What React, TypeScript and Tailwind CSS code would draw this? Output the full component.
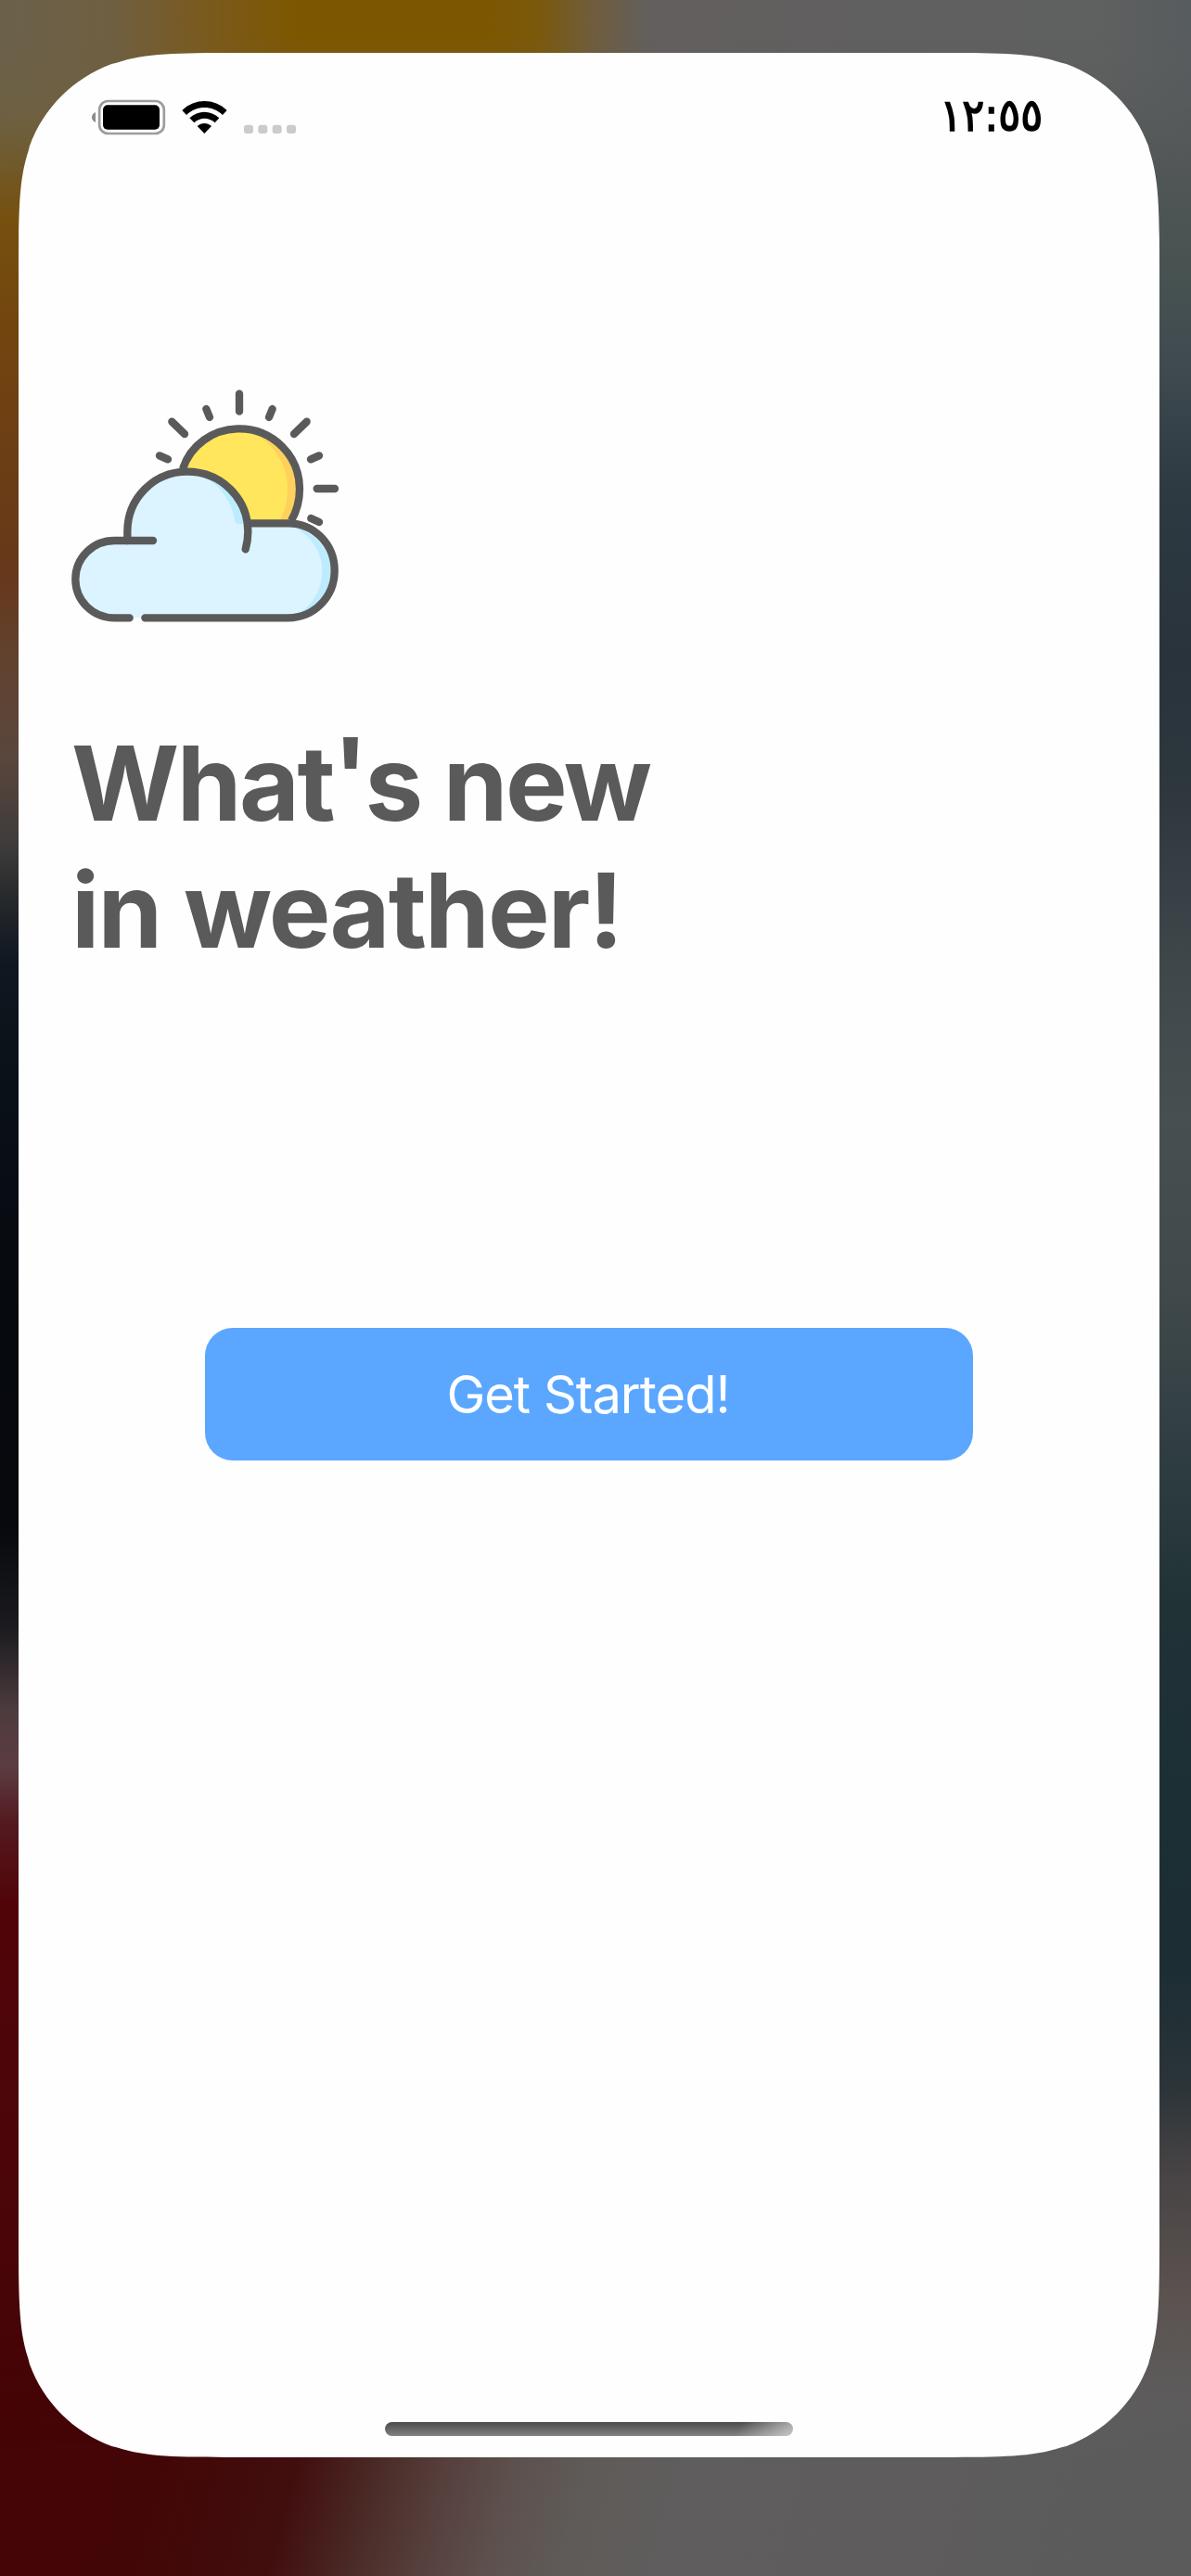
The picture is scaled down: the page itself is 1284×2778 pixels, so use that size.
const CARD_CLIP =
  "[clip-path:path('M243_0L987_0C1056.9_0_1091.9_0_1123.5_10.4L1129.6_11.9C1170.7_26.9_1203.1_59.3_1218.1_100.4L1219.6_106.5C1230_138.1_1230_173.1_1230_243L1230_2350C1230_2419.9_1230_2454.9_1219.6_2486.5L1218.1_2492.6C1203.1_2533.7_1170.7_2566.1_1129.6_2581.1L1123.5_2582.6C1091.9_2593_1056.9_2593_987_2593L243_2593C173.1_2593_138.1_2593_106.5_2582.6L100.4_2581.1C59.3_2566.1_26.9_2533.7_11.9_2492.6L10.4_2486.5C0_2454.9_0_2419.9_0_2350L0_243C0_173.1_0_138.1_10.4_106.5L11.9_100.4C26.9_59.3_59.3_26.9_100.4_11.9L106.5_10.4C138.1_0_173.1_0_243_0Z')]";

function Backdrop() {
  return (
    <div className="absolute inset-0">
      <div className="flex h-full">
        <div className="flex-1 bg-[linear-gradient(180deg,#6b614b_0px,#70603a_124px,#76500f_240px,#72450f_354px,#67381a_620px,#61422f_709px,#5a463d_815px,#3d3b3a_915px,#24272b_975px,#101720_1040px,#0a1118_1152px,#06090e_1417px,#07090d_1648px,#1b1b1f_1755px,#4c3b3e_1843px,#5c3c41_1905px,#53191f_1967px,#510408_2055px,#4c060a_2303px,#440406_2622px,#400808_2778px)]" />
        <div className="flex-1 bg-[linear-gradient(180deg,#5f5f5f_0px,#535758_160px,#485351_283px,#3f4b50_390px,#2d3a42_532px,#29333c_709px,#2d373d_850px,#3e464a_1028px,#465050_1205px,#414a4b_1382px,#303e43_1559px,#203236_1736px,#1c2f35_1949px,#1c2e34_2126px,#2b3439_2250px,#474344_2339px,#5b5350_2480px,#605e5f_2622px,#5a5a5a_2778px)]" />
      </div>
      <div className="absolute inset-x-0 top-0 h-[200px] bg-[linear-gradient(90deg,#6b614b_0px,#6f5f42_120px,#7a5a1e_220px,#7d5700_320px,#7d5700_520px,#7a590c_580px,#6f5d3d_640px,#635f5e_700px,#606060_1000px,#5f6060_1180px,#575c5e_1284px)] [mask-image:linear-gradient(180deg,#000_40px,transparent_200px)]" />
      <div className="absolute inset-x-0 bottom-0 h-[260px] bg-[linear-gradient(105deg,#450405_0px,#430606_200px,#410e0e_345px,#4b2c28_435px,#563f3c_500px,#5d514e_575px,#5f5b58_650px,#5f5d5d_750px,#5e5c5d_1000px,#5b5b5b_1284px)] [mask-image:linear-gradient(0deg,#000_130px,transparent_260px)]" />
    </div>
  );
}

function StatusIcons() {
  return (
    <svg className="h-[70px] w-[250px]" viewBox="0 0 750 210">
      <path d="M39 93C31 96 27 102 27 109.500S31 123 39 126Z" fill="#8c8c8c" />
      <rect x="51.500" y="57" width="209" height="105" rx="28" fill="none" stroke="#9c9c9c" strokeWidth="8" />
      <rect x="63" y="70" width="183" height="79" rx="15" fill="#000" />
      <path d="M319 87C360 47 423 47 464 87L450 102C416 70 367 70 333 102Z" fill="#000" />
      <path d="M343 112C370 86 412 86 439 112L425 127C406 109 377 109 358 127Z" fill="#000" />
      <path d="M368 138C381 126 401 126 414 138L391 162Z" fill="#000" />
      {[519, 565, 611, 657].map((x) => (
        <rect key={x} x={x} y="134" width="30" height="28" rx="9" fill="#cbcbcb" />
      ))}
    </svg>
  );
}

const RAYS =
  "M594 74V131M487 123L498 150M701 123L690 150M376 164L417 204M812 164L771 204M336 274L363 286M852 274L825 286M845 381H903M826 477L852 489";

function WeatherIcon() {
  return (
    <svg className="h-[290px] w-[320px]" viewBox="0 0 960 870" fill="none" strokeLinecap="round" strokeWidth="25">
      <path d="M410 320C434 243 508 187 594 187C701 187 789 274 789 382C789 420 779 460 762 493H625Z" fill="#ffe65c" />
      <path d="M640 199C725 225 777 300 777 382C777 425 767 460 752 485H724C742 455 750 420 750 382C750 305 710 240 640 199Z" fill="#ffd15c" />
      <path d="M190 549H232V520C232 412 318 326 425 326C525 326 605 395 622 493H752C836 493 902 561 902 646C902 731 836 799 752 799H190C120 799 64 743 64 674S120 549 190 549Z" fill="#dbf4ff" />
      <path d="M470 338C550 350 607 415 619 495H590Q581 495 579 483C570 420 530 365 470 338Z" fill="#bcecfd" />
      <path d="M765 503C840 520 890 580 890 646C890 716 840 778 775 790C828 765 862 710 862 646C862 585 825 530 765 503Z" fill="#bcecfd" />
      <g stroke="#5a5a5a">
        <path d={RAYS} />
        <path d="M411 317C436 241 508 187 594 187C702 187 789 274 789 382C789 420 779 455 762 485" strokeLinecap="butt" />
        <path d="M232 549V520C232 412 318 326 425 326C535 326 622 412 622 520C622 542 619 560 614 577" />
        <path d="M315 549H190C120 549 64 605 64 674S120 799 190 799H239" />
        <path d="M630 493H752C836 493 902 561 902 646C902 731 836 799 752 799H289" />
      </g>
    </svg>
  );
}

export default function App() {
  return (
    <div className="relative h-[2778px] w-[1284px] overflow-hidden pt-[57px] pl-5">
      <Backdrop />
      <main className={`relative flex h-[2593px] w-[1230px] flex-col bg-[#fefefe] ${CARD_CLIP}`}>
        <header className="flex h-[103px] items-start justify-between pt-[33px] pr-[126px] pl-[70px]">
          <StatusIcons />
          <time
            dir="ltr"
            className="mt-[6px] block origin-right scale-x-[0.93] font-['DejaVu_Sans',sans-serif] text-[48px] leading-[56px] text-black [-webkit-text-stroke:1.6px_#000]"
          >
            ١٢:٥٥
          </time>
        </header>
        <div className="mt-[240px] pl-10">
          <WeatherIcon />
        </div>
        <h1 className="mt-[86px] pl-[57px] font-['Inter',sans-serif] text-[112px] leading-[137px] font-bold whitespace-nowrap text-[#5a5a5a]">
          <span className="block tracking-[-2.5px]">
            What<span className="relative -top-[9px]">'</span>s new
          </span>
          <span className="block tracking-[-1.9px]">in weather!</span>
        </h1>
        <button className="mt-[382px] ml-[201px] flex h-[143px] w-[828px] items-center justify-center rounded-[30px] bg-[#5ba7ff] pr-[2px] font-['Inter',sans-serif] text-[56px] tracking-[-1px] text-white">
          Get Started!
        </button>
        <div className="mt-auto mb-[23px] ml-[395px] h-[15px] w-[440px] rounded-full bg-[linear-gradient(115deg,transparent_86%,#ffffff90_100%),linear-gradient(180deg,#4a4a4a,#828282)]" />
      </main>
    </div>
  );
}
